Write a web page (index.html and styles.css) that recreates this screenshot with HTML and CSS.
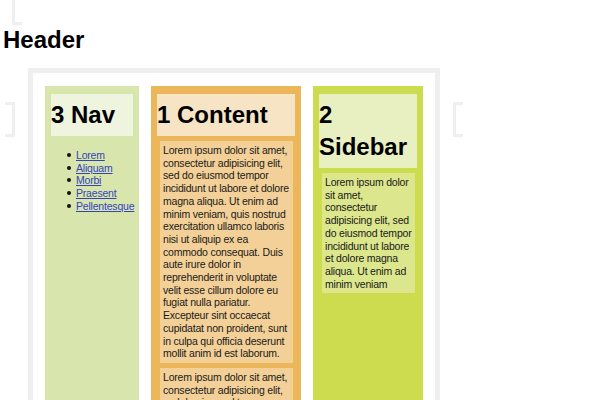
FILE: index.html
```html
<!DOCTYPE html>
<html lang="en">
<head>
<meta charset="utf-8">
<title>Layout</title>
<link rel="stylesheet" href="styles.css">
</head>
<body>
<span class="mark mark-top"></span>
<span class="mark mark-left"></span>
<span class="mark mark-right"></span>
<h1 class="page-title">Header</h1>
<div class="frame">
  <div class="column nav">
    <h1 class="col-title">3 Nav</h1>
    <ul class="nav-list">
      <li><a href="#">Lorem</a></li>
      <li><a href="#">Aliquam</a></li>
      <li><a href="#">Morbi</a></li>
      <li><a href="#">Praesent</a></li>
      <li><a href="#">Pellentesque</a></li>
    </ul>
  </div>
  <div class="column content">
    <h1 class="col-title">1 Content</h1>
    <p class="text">Lorem ipsum dolor sit amet, consectetur adipisicing elit, sed do eiusmod tempor incididunt ut labore et dolore magna aliqua. Ut enim ad minim veniam, quis nostrud exercitation ullamco laboris nisi ut aliquip ex ea commodo consequat. Duis aute irure dolor in reprehenderit in voluptate velit esse cillum dolore eu fugiat nulla pariatur. Excepteur sint occaecat cupidatat non proident, sunt in culpa qui officia deserunt mollit anim id est laborum.</p>
    <p class="text">Lorem ipsum dolor sit amet, consectetur adipisicing elit, sed do eiusmod tempor incididunt ut labore et dolore magna aliqua. Ut enim ad minim veniam, quis nostrud exercitation ullamco laboris nisi ut aliquip ex ea commodo consequat.</p>
  </div>
  <div class="column sidebar">
    <h1 class="col-title">2 Sidebar</h1>
    <p class="text">Lorem ipsum dolor sit amet, consectetur adipisicing elit, sed do eiusmod tempor incididunt ut labore et dolore magna aliqua. Ut enim ad minim veniam</p>
  </div>
</div>
</body>
</html>
```
FILE: styles.css
```css
html, body {
  margin: 0;
  padding: 0;
  background: #ffffff;
}
body {
  position: relative;
  font-family: "Liberation Sans", Arial, Helvetica, sans-serif;
  color: #000;
  overflow: hidden;
  height: 400px;
}
.mark {
  position: absolute;
  display: block;
  box-sizing: border-box;
  border: 0 solid #efefef;
}
.mark-top {
  left: 12px;
  top: 0;
  width: 10px;
  height: 25px;
  border-left-width: 3px;
  border-bottom-width: 3px;
}
.mark-left {
  left: 5px;
  top: 102px;
  width: 10px;
  height: 35px;
  border-width: 3px 3px 3px 0;
}
.mark-right {
  left: 453px;
  top: 102px;
  width: 10px;
  height: 35px;
  border-width: 3px 0 3px 3px;
}
.page-title {
  margin: 24px 0 12px 3px;
  font-size: 24px;
  line-height: 32px;
  font-weight: bold;
}
.frame {
  margin-left: 28px;
  width: 378px;
  border: 5px solid #efefef;
  border-bottom: 0;
  padding: 13px 12px 0 12px;
  display: flex;
  gap: 12px;
  align-items: stretch;
}
.column {
  box-sizing: border-box;
  padding: 8px 6px 40px 6px;
}
.nav {
  width: 94px;
  background: #d8e6ad;
}
.content {
  width: 150px;
  background: #ebb75a;
}
.sidebar {
  width: 110px;
  background: #cddb4f;
}
.col-title {
  margin: 0;
  padding: 5px 0;
  font-size: 24px;
  line-height: 32px;
  font-weight: bold;
}
.nav .col-title {
  background: #eef4de;
}
.content .col-title {
  background: #f7e4c4;
}
.sidebar .col-title {
  background: #e8f0c2;
}
.nav-list {
  margin: 13px 0 0 0;
  padding-left: 25px;
  list-style: none;
  font-size: 10.5px;
  letter-spacing: -0.2px;
  line-height: 12.7px;
}
.nav-list li {
  white-space: nowrap;
}
.nav-list li::before {
  content: "";
  display: inline-block;
  width: 4px;
  height: 4px;
  border-radius: 50%;
  background: #111;
  margin-left: -9px;
  margin-right: 5px;
  vertical-align: 2px;
}
.nav-list a {
  color: #3344bb;
}
.text {
  margin: 5px 2px 0 3px;
  padding: 3px;
  font-size: 10.5px;
  letter-spacing: -0.2px;
  line-height: 12.7px;
  color: #1a1a1a;
}
.content .text {
  background: #f3d097;
}
.sidebar .text {
  background: #dce68c;
}
```
